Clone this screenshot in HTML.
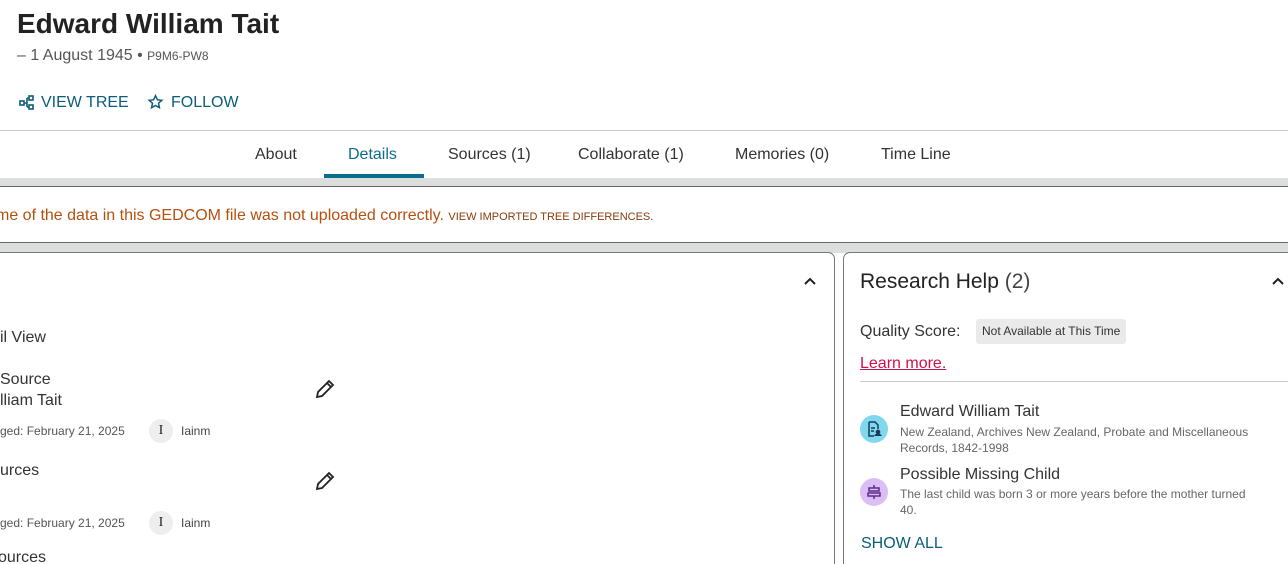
<!DOCTYPE html>
<html><head><meta charset="utf-8"><style>
*{margin:0;padding:0;box-sizing:border-box}
html,body{width:1288px;height:564px;overflow:hidden}
body{background:#fff;font-family:"Liberation Sans",sans-serif;color:#333;position:relative}
.a{position:absolute;white-space:nowrap}
</style></head><body>
<div class="a" style="left:17px;top:8px;font-size:28px;font-weight:bold;color:#222">Edward William Tait</div>
<div class="a" style="left:17px;top:47px;font-size:16px;color:#555">– 1 August 1945 • <span style="font-size:12px">P9M6-PW8</span></div>
<svg class="a" style="left:19px;top:95px" width="16" height="15" viewBox="0 0 16 15" fill="none" stroke="#0b5d7a" stroke-width="1.6"><rect x="1" y="6" width="4" height="4"/><rect x="10" y="1" width="4" height="4"/><rect x="10" y="10" width="4" height="4"/><path d="M5 8h3M8 3v9M8 3h2M8 12h2"/></svg>
<div class="a" style="left:41px;top:94px;font-size:16px;color:#0b5d7a">VIEW TREE</div>
<svg class="a" style="left:147px;top:94px" width="17" height="16" viewBox="0 0 24 24" fill="none" stroke="#0b5d7a" stroke-width="2.2"><path d="M12 2.5l2.9 6.2 6.6.7-5 4.5 1.4 6.6L12 17.2 6.1 20.5l1.4-6.6-5-4.5 6.6-.7z"/></svg>
<div class="a" style="left:171px;top:94px;font-size:16px;color:#0b5d7a">FOLLOW</div>
<div class="a" style="left:0;top:130px;width:1288px;height:1px;background:#ccc"></div>
<div class="a" style="left:255px;top:146px;font-size:16px;color:#333">About</div>
<div class="a" style="left:348px;top:146px;font-size:16px;color:#0b6d8c">Details</div>
<div class="a" style="left:448px;top:146px;font-size:16px;color:#333">Sources (1)</div>
<div class="a" style="left:578px;top:146px;font-size:16px;color:#333">Collaborate (1)</div>
<div class="a" style="left:735px;top:146px;font-size:16px;color:#333">Memories (0)</div>
<div class="a" style="left:881px;top:146px;font-size:16px;color:#333">Time Line</div>
<div class="a" style="left:0;top:178px;width:1288px;height:75px;background:#dcdddd"></div>
<div class="a" style="left:324px;top:174px;width:100px;height:4px;background:#0b6d8c"></div>
<div class="a" style="left:0;top:186px;width:1288px;height:57px;background:#fff;border-top:1px solid #666;border-bottom:1px solid #666"></div>
<div class="a" style="left:-4px;top:207px;font-size:16px;color:#b5500f">me of the data in this GEDCOM file was not uploaded correctly. <span style="font-size:11px;color:#8a3a0a">VIEW IMPORTED TREE DIFFERENCES.</span></div>
<div class="a" style="left:-10px;top:252px;width:845px;height:312px;background:#fff;border:1px solid #777;border-bottom:none;border-radius:7px 7px 0 0"></div>
<div class="a" style="left:843px;top:252px;width:445px;height:312px;background:#fff;border:1px solid #777;border-right:none;border-bottom:none;border-radius:7px 0 0 0"></div>
<svg class="a" style="left:803px;top:276px" width="14" height="10" viewBox="0 0 14 10" fill="none" stroke="#222" stroke-width="2"><path d="M2 8l5-5 5 5"/></svg>
<svg class="a" style="left:1271px;top:276px" width="14" height="10" viewBox="0 0 14 10" fill="none" stroke="#222" stroke-width="2"><path d="M2 8l5-5 5 5"/></svg>
<div class="a" style="left:0;top:329px;font-size:16px">il View</div>
<div class="a" style="left:0;top:369px;font-size:16px;line-height:21px">Source<br>lliam Tait</div>
<div class="a" style="left:0;top:424px;font-size:12px;color:#555">ged: February 21, 2025</div>
<div class="a" style="left:149px;top:419px;width:24px;height:24px;border-radius:50%;background:#eee;font:14px 'Liberation Serif',serif;text-align:center;line-height:24px;color:#222">I</div>
<div class="a" style="left:181px;top:424px;font-size:12px;color:#444">Iainm</div>
<div class="a" style="left:0;top:462px;font-size:16px">urces</div>
<div class="a" style="left:0;top:516px;font-size:12px;color:#555">ged: February 21, 2025</div>
<div class="a" style="left:149px;top:511px;width:24px;height:24px;border-radius:50%;background:#eee;font:14px 'Liberation Serif',serif;text-align:center;line-height:24px;color:#222">I</div>
<div class="a" style="left:181px;top:516px;font-size:12px;color:#444">Iainm</div>
<div class="a" style="left:-2px;top:551px;font-size:16px;line-height:13px;height:13px;overflow:hidden">ources</div>
<svg class="a" style="left:313px;top:377px" width="24" height="24" viewBox="0 0 24 24" fill="none" stroke="#222" stroke-width="1.8"><path d="M4 20l1-5L16 4l4 4L9 19z M14 6l4 4"/></svg>
<svg class="a" style="left:313px;top:469px" width="24" height="24" viewBox="0 0 24 24" fill="none" stroke="#222" stroke-width="1.8"><path d="M4 20l1-5L16 4l4 4L9 19z M14 6l4 4"/></svg>
<div class="a" style="left:860px;top:270px;font-size:21px;color:#222">Research Help <span style="color:#444">(2)</span></div>
<div class="a" style="left:860px;top:323px;font-size:16px">Quality Score:</div>
<div class="a" style="left:976px;top:319px;height:25px;padding:0 6px;background:#eaeaea;border-radius:3px;font-size:12px;line-height:25px;color:#333">Not Available at This Time</div>
<div class="a" style="left:860px;top:355px;font-size:16px;color:#d0104c;text-decoration:underline">Learn more.</div>
<div class="a" style="left:860px;top:381px;width:428px;height:1px;background:#ccc"></div>
<div class="a" style="left:860px;top:415px;width:28px;height:28px;border-radius:50%;background:#7fd8ee"></div>
<svg class="a" style="left:866px;top:421px" width="16" height="16" viewBox="0 0 16 16" fill="none" stroke="#1a3a5a" stroke-width="1.5"><path d="M3 1h6l3 3v4M3 1v14h5M5 7h4M5 10h3"/><circle cx="12" cy="11" r="1.6" fill="#1a3a5a"/><path d="M9 15c0-2 6-2 6 0" fill="#1a3a5a"/></svg>
<div class="a" style="left:900px;top:403px;font-size:16px;color:#333">Edward William Tait</div>
<div class="a" style="left:900px;top:424px;font-size:12px;color:#666;line-height:16px">New Zealand, Archives New Zealand, Probate and Miscellaneous<br>Records, 1842-1998</div>
<div class="a" style="left:860px;top:478px;width:28px;height:28px;border-radius:50%;background:#dcbef5"></div>
<svg class="a" style="left:866px;top:484px" width="16" height="16" viewBox="0 0 16 16" fill="none" stroke="#5a2a8a" stroke-width="1.5"><path d="M8 1v3M8 12v3M3 4h10v3H3zM2 9h12v3H2z"/></svg>
<div class="a" style="left:900px;top:466px;font-size:16px;color:#333">Possible Missing Child</div>
<div class="a" style="left:900px;top:486px;font-size:12px;color:#666;line-height:16px">The last child was born 3 or more years before the mother turned<br>40.</div>
<div class="a" style="left:861px;top:535px;font-size:16px;color:#0b5d7a">SHOW ALL</div>
</body></html>
